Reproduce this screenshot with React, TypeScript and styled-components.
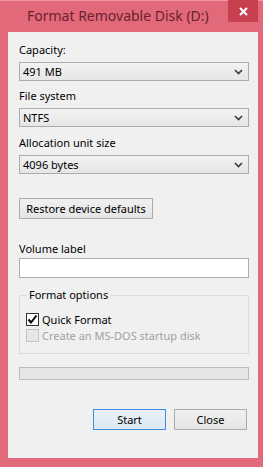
import React from 'react';
import styled, { createGlobalStyle } from 'styled-components';

const GlobalStyle = createGlobalStyle`
  html, body {
    margin: 0;
    padding: 0;
    background: #ffffff;
  }
  body {
    font-family: "Noto Sans", "Liberation Sans", sans-serif;
    font-size: 11px;
    color: #000;
  }
`;

const Frame = styled.div`
  width: 263px;
  height: 467px;
  box-sizing: border-box;
  background: #e2697a;
  border-top: 1px solid #ec9aa5;
  padding: 0 5px 9px 8px;
  display: flex;
  flex-direction: column;
`;

const TitleBar = styled.div`
  height: 31px;
  display: flex;
  align-items: flex-start;
  position: relative;
`;

const Title = styled.div`
  margin: 5px 0 0 19px;
  font-size: 14px;
  line-height: 20px;
  color: #6b1f2e;
`;

const CloseButton = styled.div`
  position: absolute;
  top: -1px;
  right: 0;
  width: 30px;
  height: 22px;
  background: #c7404f;
  display: flex;
  align-items: center;
  justify-content: center;
`;

const Client = styled.div`
  flex: 1;
  background: #f0f0f0;
  padding: 10px 9px 0 11px;
  display: flex;
  flex-direction: column;
`;

const Label = styled.div<{ $top?: number; $bottom?: number }>`
  height: 16px;
  line-height: 16px;
  margin-top: ${(p) => p.$top ?? 0}px;
  margin-bottom: ${(p) => p.$bottom ?? 4}px;
  white-space: nowrap;
`;

const Select = styled.div`
  height: 19px;
  box-sizing: border-box;
  border: 1px solid #acacac;
  background: linear-gradient(#f2f2f2, #e6e6e6);
  display: flex;
  align-items: center;
  padding-left: 3px;
  line-height: 17px;
`;

const SelectValue = styled.span`
  flex: 1;
`;

const ArrowBox = styled.span`
  width: 17px;
  height: 17px;
  display: flex;
  align-items: center;
  justify-content: center;
  margin-right: 1px;
`;

const ButtonWrap = styled.div`
  margin-top: 24px;
  display: flex;
`;

const Button = styled.div<{ $default?: boolean; $width: number }>`
  width: ${(p) => p.$width}px;
  height: 21px;
  box-sizing: border-box;
  border: 1px solid ${(p) => (p.$default ? '#3c8fdc' : '#acacac')};
  background: ${(p) =>
    p.$default ? 'linear-gradient(#eaf1f8, #dde8f3)' : 'linear-gradient(#f0f0f0, #e5e5e5)'};
  display: flex;
  align-items: center;
  justify-content: center;
  white-space: nowrap;
`;

const TextBox = styled.div`
  height: 20px;
  box-sizing: border-box;
  border: 1px solid #abadb3;
  background: #ffffff;
`;

const GroupBox = styled.fieldset`
  margin: 9px 0 0 0;
  padding: 9px 0 0 6px;
  height: 67px;
  box-sizing: border-box;
  border: 1px solid #dcdcdc;
  min-width: 0;
`;

const Legend = styled.legend`
  padding: 0 2px;
  margin-left: 1px;
  line-height: 16px;
`;

const CheckRow = styled.div<{ $disabled?: boolean }>`
  display: flex;
  align-items: center;
  height: 16px;
  color: ${(p) => (p.$disabled ? '#a0a0a0' : '#000')};
  margin-top: -1px;
  & + & {
    margin-top: 0;
  }
`;

const CheckBox = styled.span<{ $disabled?: boolean }>`
  width: 13px;
  height: 13px;
  box-sizing: border-box;
  border: 1px solid ${(p) => (p.$disabled ? '#c4c4c4' : '#333333')};
  background: ${(p) => (p.$disabled ? '#e6e6e6' : '#ffffff')};
  margin-right: 3px;
  display: flex;
  align-items: center;
  justify-content: center;
`;

const Progress = styled.div`
  margin-top: 13px;
  height: 13px;
  box-sizing: border-box;
  border: 1px solid #bcbcbc;
  background: #e6e6e6;
`;

const ButtonRow = styled.div`
  margin-top: 29px;
  display: flex;
  justify-content: flex-end;
  gap: 8px;
  padding-right: 2px;
`;

const Chevron = () => (
  <svg width="9" height="6" viewBox="0 0 9 6">
    <path d="M1 1 L4.5 4.5 L8 1" fill="none" stroke="#3a3a3a" strokeWidth="1.6" />
  </svg>
);

const Dropdown: React.FC<{ value: string }> = ({ value }) => (
  <Select>
    <SelectValue>{value}</SelectValue>
    <ArrowBox>
      <Chevron />
    </ArrowBox>
  </Select>
);

export default function App() {
  return (
    <>
      <GlobalStyle />
      <Frame>
        <TitleBar>
          <Title>Format Removable Disk (D:)</Title>
          <CloseButton>
            <svg width="9" height="9" viewBox="0 0 9 9">
              <path d="M1 1 L8 8 M8 1 L1 8" stroke="#ffffff" strokeWidth="2" />
            </svg>
          </CloseButton>
        </TitleBar>
        <Client>
          <Label>Capacity:</Label>
          <Dropdown value="491 MB" />
          <Label $top={7}>File system</Label>
          <Dropdown value="NTFS" />
          <Label $top={8}>Allocation unit size</Label>
          <Dropdown value="4096 bytes" />
          <ButtonWrap>
            <Button $width={134}>Restore device defaults</Button>
          </ButtonWrap>
          <Label $top={22} $bottom={1}>Volume label</Label>
          <TextBox />
          <GroupBox>
            <Legend>Format options</Legend>
            <CheckRow>
              <CheckBox>
                <svg width="11" height="11" viewBox="0 0 11 11">
                  <path d="M1.5 5.5 L4 8.5 L9.5 1.5" fill="none" stroke="#000" strokeWidth="2" />
                </svg>
              </CheckBox>
              Quick Format
            </CheckRow>
            <CheckRow $disabled>
              <CheckBox $disabled />
              Create an MS-DOS startup disk
            </CheckRow>
          </GroupBox>
          <Progress />
          <ButtonRow>
            <Button $default $width={73}>Start</Button>
            <Button $width={73}>Close</Button>
          </ButtonRow>
        </Client>
      </Frame>
    </>
  );
}
